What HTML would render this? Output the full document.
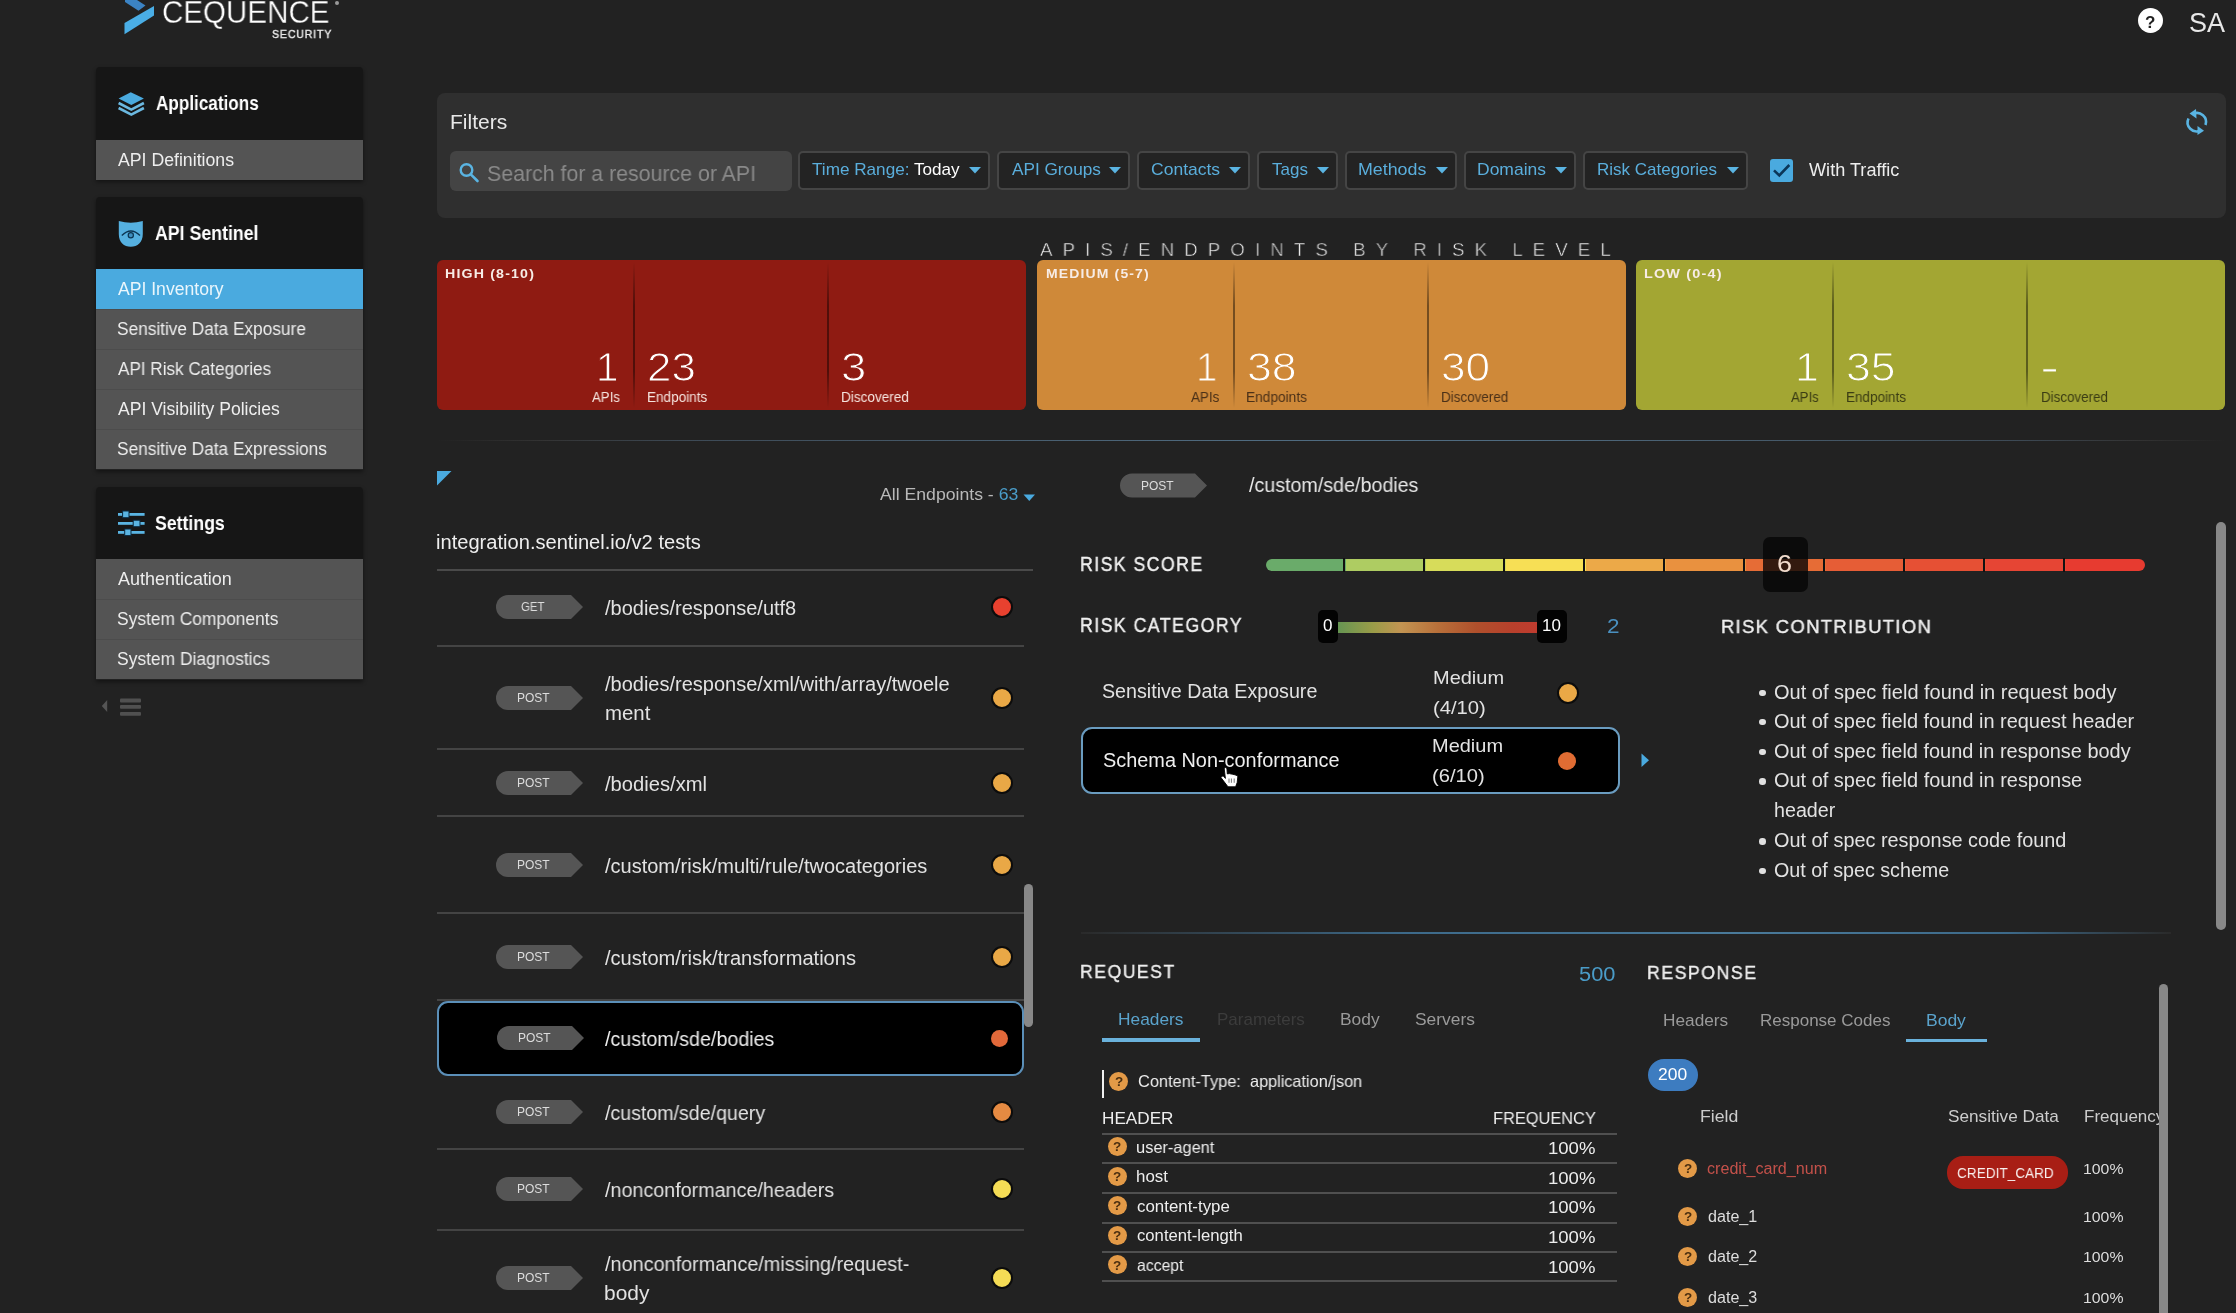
<!DOCTYPE html>
<html><head><meta charset="utf-8">
<style>
*{margin:0;padding:0;box-sizing:border-box}
html,body{width:2236px;height:1313px;overflow:hidden;background:#222222;font-family:"Liberation Sans",sans-serif;color:#e6e6e6}
.a{position:absolute;white-space:nowrap;line-height:1}
body>div[id]{will-change:transform}
svg{position:absolute;overflow:visible}
</style></head><body>
<svg style="left:0;top:0" width="200" height="50"><polygon points="125,0 137,0 145.5,5.5 138.5,10.7 125,2" fill="#3b83c4"/><polygon points="124.5,23 154,6 154,15.5 124.5,34.3" fill="#4aaee6"/></svg>
<div id="t1" class="a" style="left:162.03px;top:-3.3px;font-size:30.5px;color:#ffffff;transform:scaleX(0.9690);transform-origin:0 0;-webkit-text-stroke:0.35px #222;">CEQUENCE</div>
<div class="a" style="left:335px;top:1px;width:4px;height:4px;background:#9a9a9a;border-radius:50%"></div>
<div id="t2" class="a" style="left:272.00px;top:28.5px;font-size:11.5px;color:#ececec;letter-spacing:0.9px;transform:scaleX(0.9219);transform-origin:0 0;-webkit-text-stroke:0.4px #ececec;">SECURITY</div>
<div class="a" style="left:2138px;top:8px;width:25px;height:25px;background:#ffffff;border-radius:50%"></div>
<div id="t3" class="a" style="left:2145.00px;top:13.6px;font-size:17px;color:#222;font-weight:bold;">?</div>
<div id="t4" class="a" style="left:2189.41px;top:10.0px;font-size:27px;color:#e8e8e8;transform:scaleX(0.9914);transform-origin:0 0;">SA</div>
<div class="a" style="left:96px;top:67px;width:267px;height:113px;background:transparent;box-shadow:0 2px 4px rgba(0,0,0,0.45);border-radius:4px 4px 0 0"></div>
<div class="a" style="left:96px;top:197px;width:267px;height:273px;background:transparent;box-shadow:0 2px 4px rgba(0,0,0,0.45);border-radius:4px 4px 0 0"></div>
<div class="a" style="left:96px;top:487px;width:267px;height:193px;background:transparent;box-shadow:0 2px 4px rgba(0,0,0,0.45);border-radius:4px 4px 0 0"></div>
<div class="a" style="left:96px;top:67px;width:267px;height:73px;background:#161616;border-radius:4px 4px 0 0"></div>
<svg style="left:0;top:0" width="1" height="1"><g fill="#4aaadf"><polygon points="118.6,98.5 130.75,92.2 143.9,98.5 131.3,105.1"/><polyline points="118.6,103 131.3,109.6 143.9,103" fill="none" stroke="#6bb8e0" stroke-width="2.6"/><polyline points="118.6,108 131.3,114.6 143.9,108" fill="none" stroke="#6bb8e0" stroke-width="2.6"/></g></svg>
<div id="t5" class="a" style="left:155.80px;top:93.5px;font-size:19.5px;color:#ffffff;font-weight:bold;transform:scaleX(0.8778);transform-origin:0 0;">Applications</div>
<div class="a" style="left:96px;top:140px;width:267px;height:40px;background:#545454;"></div>
<div id="t6" class="a" style="left:118.20px;top:151.7px;font-size:17.5px;color:#eeeeee;transform:scaleX(1.0105);transform-origin:0 0;">API Definitions</div>
<div class="a" style="left:96px;top:197px;width:267px;height:73px;background:#161616;border-radius:4px 4px 0 0"></div>
<svg style="left:0;top:0" width="1" height="1"><path d="M118.8,221 Q130.8,224.5 142.8,221 L142.8,234 C142.8,242.5 137.5,246.8 130.8,246.8 C124,246.8 118.8,242.5 118.8,234 Z" fill="#55b0e0"/><path d="M121.8,235.5 Q130.8,226.5 140,235.5" fill="none" stroke="#0c3552" stroke-width="1.3"/><circle cx="130.8" cy="235.2" r="2.6" fill="#3f8fbf" stroke="#0c3552" stroke-width="1.2"/></svg>
<div id="t7" class="a" style="left:155.00px;top:223.5px;font-size:19.5px;color:#ffffff;font-weight:bold;transform:scaleX(0.9097);transform-origin:0 0;">API Sentinel</div>
<div class="a" style="left:96px;top:269px;width:267px;height:40px;background:#4aaadf;"></div>
<div id="t8" class="a" style="left:118.00px;top:280.7px;font-size:17.5px;color:#eaf6fc;transform:scaleX(1.0048);transform-origin:0 0;">API Inventory</div>
<div class="a" style="left:96px;top:309px;width:267px;height:40px;background:#545454;"></div>
<div class="a" style="left:96px;top:309px;width:267px;height:1px;background:#4c4c4c;"></div>
<div id="t9" class="a" style="left:117.01px;top:320.7px;font-size:17.5px;color:#eeeeee;transform:scaleX(0.9858);transform-origin:0 0;">Sensitive Data Exposure</div>
<div class="a" style="left:96px;top:349px;width:267px;height:40px;background:#545454;"></div>
<div class="a" style="left:96px;top:349px;width:267px;height:1px;background:#4c4c4c;"></div>
<div id="t10" class="a" style="left:118.30px;top:360.7px;font-size:17.5px;color:#eeeeee;transform:scaleX(0.9782);transform-origin:0 0;">API Risk Categories</div>
<div class="a" style="left:96px;top:389px;width:267px;height:40px;background:#545454;"></div>
<div class="a" style="left:96px;top:389px;width:267px;height:1px;background:#4c4c4c;"></div>
<div id="t11" class="a" style="left:118.30px;top:400.7px;font-size:17.5px;color:#eeeeee;transform:scaleX(1.0037);transform-origin:0 0;">API Visibility Policies</div>
<div class="a" style="left:96px;top:429px;width:267px;height:40px;background:#545454;"></div>
<div class="a" style="left:96px;top:429px;width:267px;height:1px;background:#4c4c4c;"></div>
<div id="t12" class="a" style="left:117.31px;top:440.7px;font-size:17.5px;color:#eeeeee;transform:scaleX(0.9853);transform-origin:0 0;">Sensitive Data Expressions</div>
<div class="a" style="left:96px;top:487px;width:267px;height:73px;background:#161616;border-radius:4px 4px 0 0"></div>
<svg style="left:0;top:0" width="1" height="1"><g fill="#5ab4e2"><rect x="118" y="513" width="26.6" height="2.8"/><rect x="118" y="522" width="26.6" height="2.8"/><rect x="118" y="531" width="26.6" height="2.8"/><rect x="122.6" y="511" width="6.4" height="6.7" stroke="#0a2a40" stroke-width="1"/><rect x="133.2" y="520.2" width="6.8" height="6.5" stroke="#0a2a40" stroke-width="1"/><rect x="124.7" y="529" width="6.3" height="6.6" stroke="#0a2a40" stroke-width="1"/></g></svg>
<div id="t13" class="a" style="left:155.00px;top:513.5px;font-size:19.5px;color:#ffffff;font-weight:bold;transform:scaleX(0.9066);transform-origin:0 0;">Settings</div>
<div class="a" style="left:96px;top:559px;width:267px;height:40px;background:#545454;"></div>
<div id="t14" class="a" style="left:118.30px;top:570.7px;font-size:17.5px;color:#eeeeee;transform:scaleX(1.0264);transform-origin:0 0;">Authentication</div>
<div class="a" style="left:96px;top:599px;width:267px;height:40px;background:#545454;"></div>
<div class="a" style="left:96px;top:599px;width:267px;height:1px;background:#4c4c4c;"></div>
<div id="t15" class="a" style="left:117.31px;top:610.7px;font-size:17.5px;color:#eeeeee;transform:scaleX(0.9932);transform-origin:0 0;">System Components</div>
<div class="a" style="left:96px;top:639px;width:267px;height:40px;background:#545454;"></div>
<div class="a" style="left:96px;top:639px;width:267px;height:1px;background:#4c4c4c;"></div>
<div id="t16" class="a" style="left:117.30px;top:650.7px;font-size:17.5px;color:#eeeeee;transform:scaleX(0.9954);transform-origin:0 0;">System Diagnostics</div>
<svg style="left:0;top:0" width="1" height="1"><polygon points="101.8,706.1 107.2,699.9 107.2,712" fill="#555"/><rect x="120" y="698.6" width="21" height="4" rx="1" fill="#505050"/><rect x="120" y="705" width="21" height="3.8" rx="1" fill="#505050"/><rect x="120" y="712" width="21" height="3.8" rx="1" fill="#505050"/></svg>
<div class="a" style="left:437px;top:93px;width:1789px;height:125px;background:#2f2f2f;border-radius:8px"></div>
<div id="t17" class="a" style="left:450.30px;top:111.2px;font-size:21px;color:#e8e8e8;transform:scaleX(1.0000);transform-origin:0 0;">Filters</div>
<div class="a" style="left:450px;top:151px;width:342px;height:40px;background:#444444;border-radius:6px"></div>
<svg style="left:0;top:0" width="1" height="1"><circle cx="466.5" cy="170" r="5.8" fill="none" stroke="#5ab4e2" stroke-width="2.4"/><line x1="470.8" y1="174.3" x2="477.5" y2="181" stroke="#5ab4e2" stroke-width="2.6" stroke-linecap="round"/></svg>
<div id="t18" class="a" style="left:487.06px;top:162.7px;font-size:22px;color:#8a8a8a;transform:scaleX(0.9692);transform-origin:0 0;">Search for a resource or API</div>
<div class="a" style="left:798px;top:151px;width:192px;height:39px;background:#232323;border:2px solid #454545;border-radius:5px"></div>
<div id="t19" class="a" style="left:811.80px;top:161.1px;font-size:17px;color:#5aaedc;transform:scaleX(1.0082);transform-origin:0 0;">Time Range: <span style="color:#fff">Today</span></div>
<svg style="left:0;top:0" width="1" height="1"><polygon points="969,167 981,167 975,173.5" fill="#5ab4e2"/></svg>
<div class="a" style="left:997px;top:151px;width:133px;height:39px;background:#232323;border:2px solid #454545;border-radius:5px"></div>
<div id="t20" class="a" style="left:1012.00px;top:161.1px;font-size:17px;color:#5aaedc;transform:scaleX(1.0115);transform-origin:0 0;">API Groups</div>
<svg style="left:0;top:0" width="1" height="1"><polygon points="1109,167 1121,167 1115,173.5" fill="#5ab4e2"/></svg>
<div class="a" style="left:1137px;top:151px;width:113px;height:39px;background:#232323;border:2px solid #454545;border-radius:5px"></div>
<div id="t21" class="a" style="left:1150.77px;top:161.1px;font-size:17px;color:#5aaedc;transform:scaleX(1.0303);transform-origin:0 0;">Contacts</div>
<svg style="left:0;top:0" width="1" height="1"><polygon points="1229,167 1241,167 1235,173.5" fill="#5ab4e2"/></svg>
<div class="a" style="left:1257px;top:151px;width:81px;height:39px;background:#232323;border:2px solid #454545;border-radius:5px"></div>
<div id="t22" class="a" style="left:1271.80px;top:161.1px;font-size:17px;color:#5aaedc;transform:scaleX(0.9917);transform-origin:0 0;">Tags</div>
<svg style="left:0;top:0" width="1" height="1"><polygon points="1317,167 1329,167 1323,173.5" fill="#5ab4e2"/></svg>
<div class="a" style="left:1345px;top:151px;width:112px;height:39px;background:#232323;border:2px solid #454545;border-radius:5px"></div>
<div id="t23" class="a" style="left:1358.25px;top:161.1px;font-size:17px;color:#5aaedc;transform:scaleX(1.0484);transform-origin:0 0;">Methods</div>
<svg style="left:0;top:0" width="1" height="1"><polygon points="1436,167 1448,167 1442,173.5" fill="#5ab4e2"/></svg>
<div class="a" style="left:1464px;top:151px;width:112px;height:39px;background:#232323;border:2px solid #454545;border-radius:5px"></div>
<div id="t24" class="a" style="left:1476.97px;top:161.1px;font-size:17px;color:#5aaedc;transform:scaleX(1.0288);transform-origin:0 0;">Domains</div>
<svg style="left:0;top:0" width="1" height="1"><polygon points="1555,167 1567,167 1561,173.5" fill="#5ab4e2"/></svg>
<div class="a" style="left:1583px;top:151px;width:165px;height:39px;background:#232323;border:2px solid #454545;border-radius:5px"></div>
<div id="t25" class="a" style="left:1597.30px;top:161.1px;font-size:17px;color:#5aaedc;transform:scaleX(1.0008);transform-origin:0 0;">Risk Categories</div>
<svg style="left:0;top:0" width="1" height="1"><polygon points="1727,167 1739,167 1733,173.5" fill="#5ab4e2"/></svg>
<div class="a" style="left:1770px;top:159px;width:23px;height:23px;background:#4aaadf;border-radius:3px"></div>
<svg style="left:0;top:0" width="1" height="1"><polyline points="1774,170.4 1779.3,175.4 1789.3,165" fill="none" stroke="#0b3658" stroke-width="2.6"/></svg>
<div id="t26" class="a" style="left:1809.40px;top:161.7px;font-size:17.5px;color:#eeeeee;transform:scaleX(1.0356);transform-origin:0 0;">With Traffic</div>
<svg style="left:0;top:0" width="1" height="1"><g fill="none" stroke="#5ab4e2" stroke-width="2.6"><path d="M2193,114 A9,9 0 0 1 2205.5,125"/><path d="M2200.5,130.5 A9,9 0 0 1 2188.5,118.5"/></g><polygon points="2189.5,113.5 2196,109 2196.5,118.5" fill="#5ab4e2"/><polygon points="2204,130.8 2197.5,135 2197.5,126" fill="#5ab4e2"/></svg>
<div id="t27" class="a" style="left:1040.02px;top:239.9px;font-size:19px;color:#e6e6e6;letter-spacing:10.3px;transform:scaleX(0.9810);transform-origin:0 0;-webkit-text-stroke:0.5px #222;">APIS/ENDPOINTS BY RISK LEVEL</div>
<div class="a" style="left:437px;top:260px;width:589px;height:150px;background:#8f1b12;border-radius:6px"></div>
<div id="t28" class="a" style="left:445.45px;top:266.6px;font-size:13.5px;color:#f7ece6;font-weight:bold;letter-spacing:1.1px;transform:scaleX(1.0518);transform-origin:0 0;">HIGH (8-10)</div>
<div class="a" style="left:633px;top:262px;width:2px;height:146px;background:linear-gradient(#0000,#00000070 30%,#00000070 75%,#0000);"></div>
<div class="a" style="left:827px;top:262px;width:2px;height:146px;background:linear-gradient(#0000,#00000070 30%,#00000070 75%,#0000);"></div>
<div id="t29" class="a" style="left:596.01px;top:347.1px;font-size:40px;color:#ffffff;transform:scaleX(1.0118);transform-origin:0 0;-webkit-text-stroke:1px #8f1b12;">1</div>
<div id="t30" class="a" style="left:592.20px;top:390.1px;font-size:14px;color:#f5e4de;transform:scaleX(0.9448);transform-origin:0 0;">APIs</div>
<div id="t31" class="a" style="left:647.20px;top:347.1px;font-size:40px;color:#ffffff;transform:scaleX(1.0975);transform-origin:0 0;-webkit-text-stroke:1px #8f1b12;">23</div>
<div id="t32" class="a" style="left:647.03px;top:390.1px;font-size:14px;color:#f5e4de;transform:scaleX(0.9672);transform-origin:0 0;">Endpoints</div>
<div id="t33" class="a" style="left:840.72px;top:347.1px;font-size:40px;color:#ffffff;transform:scaleX(1.1389);transform-origin:0 0;-webkit-text-stroke:1px #8f1b12;">3</div>
<div id="t34" class="a" style="left:841.33px;top:390.1px;font-size:14px;color:#f5e4de;transform:scaleX(0.9691);transform-origin:0 0;">Discovered</div>
<div class="a" style="left:1037px;top:260px;width:589px;height:150px;background:#cf8939;border-radius:6px"></div>
<div id="t35" class="a" style="left:1045.56px;top:266.6px;font-size:13.5px;color:#f7ece6;font-weight:bold;letter-spacing:1.1px;transform:scaleX(1.0361);transform-origin:0 0;">MEDIUM (5-7)</div>
<div class="a" style="left:1233px;top:262px;width:2px;height:146px;background:linear-gradient(#0000,#00000070 30%,#00000070 75%,#0000);"></div>
<div class="a" style="left:1427px;top:262px;width:2px;height:146px;background:linear-gradient(#0000,#00000070 30%,#00000070 75%,#0000);"></div>
<div id="t36" class="a" style="left:1196.08px;top:347.1px;font-size:40px;color:#ffffff;transform:scaleX(0.9588);transform-origin:0 0;-webkit-text-stroke:1px #cf8939;">1</div>
<div id="t37" class="a" style="left:1191.40px;top:390.1px;font-size:14px;color:#4a3018;transform:scaleX(0.9586);transform-origin:0 0;">APIs</div>
<div id="t38" class="a" style="left:1246.67px;top:347.1px;font-size:40px;color:#ffffff;transform:scaleX(1.1175);transform-origin:0 0;-webkit-text-stroke:1px #cf8939;">38</div>
<div id="t39" class="a" style="left:1246.32px;top:390.1px;font-size:14px;color:#4a3018;transform:scaleX(0.9787);transform-origin:0 0;">Endpoints</div>
<div id="t40" class="a" style="left:1441.29px;top:347.1px;font-size:40px;color:#ffffff;transform:scaleX(1.1049);transform-origin:0 0;-webkit-text-stroke:1px #cf8939;">30</div>
<div id="t41" class="a" style="left:1441.24px;top:390.1px;font-size:14px;color:#4a3018;transform:scaleX(0.9603);transform-origin:0 0;">Discovered</div>
<div class="a" style="left:1636px;top:260px;width:589px;height:150px;background:#a3a633;border-radius:6px"></div>
<div id="t42" class="a" style="left:1644.13px;top:266.6px;font-size:13.5px;color:#f7ece6;font-weight:bold;letter-spacing:1.1px;transform:scaleX(1.0676);transform-origin:0 0;">LOW (0-4)</div>
<div class="a" style="left:1832px;top:262px;width:2px;height:146px;background:linear-gradient(#0000,#00000070 30%,#00000070 75%,#0000);"></div>
<div class="a" style="left:2026px;top:262px;width:2px;height:146px;background:linear-gradient(#0000,#00000070 30%,#00000070 75%,#0000);"></div>
<div id="t43" class="a" style="left:1794.52px;top:347.1px;font-size:40px;color:#ffffff;transform:scaleX(1.0706);transform-origin:0 0;-webkit-text-stroke:1px #a3a633;">1</div>
<div id="t44" class="a" style="left:1791.40px;top:390.1px;font-size:14px;color:#3a3c14;transform:scaleX(0.9379);transform-origin:0 0;">APIs</div>
<div id="t45" class="a" style="left:1846.37px;top:347.1px;font-size:40px;color:#ffffff;transform:scaleX(1.1150);transform-origin:0 0;-webkit-text-stroke:1px #a3a633;">35</div>
<div id="t46" class="a" style="left:1846.44px;top:390.1px;font-size:14px;color:#3a3c14;transform:scaleX(0.9639);transform-origin:0 0;">Endpoints</div>
<div id="t47" class="a" style="left:2040.11px;top:347.1px;font-size:40px;color:#ffffff;transform:scaleX(1.4444);transform-origin:0 0;-webkit-text-stroke:1px #a3a633;">-</div>
<div id="t48" class="a" style="left:2041.04px;top:390.1px;font-size:14px;color:#3a3c14;transform:scaleX(0.9559);transform-origin:0 0;">Discovered</div>
<div class="a" style="left:437px;top:439.6px;width:1789px;height:1.8px;background:linear-gradient(90deg,#222 0%,#333 6%,#3d4a56 14%,#4f6b80 45%,#4f6b80 60%,#3d4a56 88%,#333 95%,#222 100%);"></div>
<svg style="left:0;top:0" width="1" height="1"><polygon points="437,471 451.5,471 437,485.5" fill="#4aaadf"/></svg>
<div id="t49" class="a" style="left:880.00px;top:486.2px;font-size:17px;color:#b8b8b8;transform:scaleX(1.0376);transform-origin:0 0;">All Endpoints - <span style="color:#4a9cc8">63</span></div>
<svg style="left:0;top:0" width="1" height="1"><polygon points="1023.5,494.6 1035,494.6 1029.25,501" fill="#4aaadf"/></svg>
<div id="t50" class="a" style="left:436.07px;top:533.0px;font-size:19.5px;color:#eeeeee;transform:scaleX(1.0309);transform-origin:0 0;">integration.sentinel.io/v2 tests</div>
<div class="a" style="left:437px;top:569px;width:596px;height:2px;background:#4a4a4a;"></div>
<svg style="left:0;top:0" width="1" height="1"><path d="M508,595 L571,595 L583,607 L571,619 L508,619 A12,12 0 0 1 508,595 Z" fill="#555555"/></svg>
<div id="t51" class="a" style="left:521.04px;top:601.1px;font-size:12px;color:#dddddd;transform:scaleX(0.9565);transform-origin:0 0;">GET</div>
<div id="t52" class="a" style="left:604.70px;top:597.8px;font-size:20px;color:#e2e2e2;transform:scaleX(0.9984);transform-origin:0 0;">/bodies/response/utf8</div>
<div class="a" style="left:990.5px;top:596px;width:22px;height:22px;background:#e8412f;border:2.5px solid #0c0c0c;border-radius:50%"></div>
<div class="a" style="left:437px;top:645px;width:587px;height:2px;background:#444444;"></div>
<svg style="left:0;top:0" width="1" height="1"><path d="M508,686 L571,686 L583,698 L571,710 L508,710 A12,12 0 0 1 508,686 Z" fill="#555555"/></svg>
<div id="t53" class="a" style="left:516.60px;top:692.1px;font-size:12px;color:#dddddd;transform:scaleX(0.9968);transform-origin:0 0;">POST</div>
<div id="t54" class="a" style="left:604.70px;top:673.6px;font-size:20px;color:#e2e2e2;transform:scaleX(0.9994);transform-origin:0 0;">/bodies/response/xml/with/array/twoele</div>
<div id="t55" class="a" style="left:604.58px;top:703.1px;font-size:20px;color:#e2e2e2;transform:scaleX(1.0205);transform-origin:0 0;">ment</div>
<div class="a" style="left:990.5px;top:687px;width:22px;height:22px;background:#e9a846;border:2.5px solid #0c0c0c;border-radius:50%"></div>
<div class="a" style="left:437px;top:748px;width:587px;height:2px;background:#444444;"></div>
<svg style="left:0;top:0" width="1" height="1"><path d="M508,771 L571,771 L583,783 L571,795 L508,795 A12,12 0 0 1 508,771 Z" fill="#555555"/></svg>
<div id="t56" class="a" style="left:516.60px;top:777.1px;font-size:12px;color:#dddddd;transform:scaleX(0.9968);transform-origin:0 0;">POST</div>
<div id="t57" class="a" style="left:604.70px;top:773.8px;font-size:20px;color:#e2e2e2;transform:scaleX(1.0090);transform-origin:0 0;">/bodies/xml</div>
<div class="a" style="left:990.5px;top:772px;width:22px;height:22px;background:#e9a846;border:2.5px solid #0c0c0c;border-radius:50%"></div>
<div class="a" style="left:437px;top:815px;width:587px;height:2px;background:#444444;"></div>
<svg style="left:0;top:0" width="1" height="1"><path d="M508,853 L571,853 L583,865 L571,877 L508,877 A12,12 0 0 1 508,853 Z" fill="#555555"/></svg>
<div id="t58" class="a" style="left:516.60px;top:859.1px;font-size:12px;color:#dddddd;transform:scaleX(0.9968);transform-origin:0 0;">POST</div>
<div id="t59" class="a" style="left:604.70px;top:855.8px;font-size:20px;color:#e2e2e2;transform:scaleX(0.9994);transform-origin:0 0;">/custom/risk/multi/rule/twocategories</div>
<div class="a" style="left:990.5px;top:854px;width:22px;height:22px;background:#e9a846;border:2.5px solid #0c0c0c;border-radius:50%"></div>
<div class="a" style="left:437px;top:912px;width:587px;height:2px;background:#444444;"></div>
<svg style="left:0;top:0" width="1" height="1"><path d="M508,945 L571,945 L583,957 L571,969 L508,969 A12,12 0 0 1 508,945 Z" fill="#555555"/></svg>
<div id="t60" class="a" style="left:516.60px;top:951.1px;font-size:12px;color:#dddddd;transform:scaleX(0.9968);transform-origin:0 0;">POST</div>
<div id="t61" class="a" style="left:604.70px;top:947.8px;font-size:20px;color:#e2e2e2;transform:scaleX(1.0036);transform-origin:0 0;">/custom/risk/transformations</div>
<div class="a" style="left:990.5px;top:946px;width:22px;height:22px;background:#e9a846;border:2.5px solid #0c0c0c;border-radius:50%"></div>
<div class="a" style="left:437px;top:999px;width:587px;height:2px;background:#444444;"></div>
<div class="a" style="left:437px;top:1001px;width:587px;height:75px;background:#000000;border:2px solid #5b8fb8;border-radius:11px"></div>
<svg style="left:0;top:0" width="1" height="1"><path d="M509,1026 L572,1026 L584,1038 L572,1050 L509,1050 A12,12 0 0 1 509,1026 Z" fill="#555555"/></svg>
<div id="t62" class="a" style="left:517.60px;top:1032.1px;font-size:12px;color:#dddddd;transform:scaleX(0.9968);transform-origin:0 0;">POST</div>
<div id="t63" class="a" style="left:605.30px;top:1028.6px;font-size:20px;color:#eeeeee;transform:scaleX(0.9826);transform-origin:0 0;">/custom/sde/bodies</div>
<div class="a" style="left:991.0px;top:1029.5px;width:17px;height:17px;background:#e2693a;border-radius:50%"></div>
<svg style="left:0;top:0" width="1" height="1"><path d="M508,1100 L571,1100 L583,1112 L571,1124 L508,1124 A12,12 0 0 1 508,1100 Z" fill="#555555"/></svg>
<div id="t64" class="a" style="left:516.60px;top:1106.1px;font-size:12px;color:#dddddd;transform:scaleX(0.9968);transform-origin:0 0;">POST</div>
<div id="t65" class="a" style="left:604.70px;top:1102.8px;font-size:20px;color:#e2e2e2;transform:scaleX(0.9793);transform-origin:0 0;">/custom/sde/query</div>
<div class="a" style="left:990.5px;top:1101px;width:22px;height:22px;background:#e58a42;border:2.5px solid #0c0c0c;border-radius:50%"></div>
<div class="a" style="left:437px;top:1148px;width:587px;height:2px;background:#444444;"></div>
<svg style="left:0;top:0" width="1" height="1"><path d="M508,1177 L571,1177 L583,1189 L571,1201 L508,1201 A12,12 0 0 1 508,1177 Z" fill="#555555"/></svg>
<div id="t66" class="a" style="left:516.60px;top:1183.1px;font-size:12px;color:#dddddd;transform:scaleX(0.9968);transform-origin:0 0;">POST</div>
<div id="t67" class="a" style="left:604.70px;top:1179.8px;font-size:20px;color:#e2e2e2;transform:scaleX(0.9862);transform-origin:0 0;">/nonconformance/headers</div>
<div class="a" style="left:990.5px;top:1178px;width:22px;height:22px;background:#f5dc55;border:2.5px solid #0c0c0c;border-radius:50%"></div>
<div class="a" style="left:437px;top:1229px;width:587px;height:2px;background:#444444;"></div>
<svg style="left:0;top:0" width="1" height="1"><path d="M508,1266 L571,1266 L583,1278 L571,1290 L508,1290 A12,12 0 0 1 508,1266 Z" fill="#555555"/></svg>
<div id="t68" class="a" style="left:516.60px;top:1272.1px;font-size:12px;color:#dddddd;transform:scaleX(0.9968);transform-origin:0 0;">POST</div>
<div id="t69" class="a" style="left:604.70px;top:1253.6px;font-size:20px;color:#e2e2e2;transform:scaleX(0.9918);transform-origin:0 0;">/nonconformance/missing/request-</div>
<div id="t70" class="a" style="left:604.25px;top:1283.1px;font-size:20px;color:#e2e2e2;transform:scaleX(1.0452);transform-origin:0 0;">body</div>
<div class="a" style="left:990.5px;top:1267px;width:22px;height:22px;background:#f5dc55;border:2.5px solid #0c0c0c;border-radius:50%"></div>
<div class="a" style="left:1024px;top:884px;width:9px;height:143px;background:#888888;border-radius:5px"></div>
<svg style="left:0;top:0" width="1" height="1"><path d="M1132,473.5 L1195,473.5 L1207,485.5 L1195,497.5 L1132,497.5 A12,12 0 0 1 1132,473.5 Z" fill="#555555"/></svg>
<div id="t71" class="a" style="left:1140.60px;top:479.6px;font-size:12px;color:#dddddd;transform:scaleX(0.9968);transform-origin:0 0;">POST</div>
<div id="t72" class="a" style="left:1249.30px;top:475.4px;font-size:20px;color:#e8e8e8;transform:scaleX(0.9831);transform-origin:0 0;">/custom/sde/bodies</div>
<div id="t73" class="a" style="left:1080.24px;top:554.9px;font-size:19.5px;color:#f0f0f0;letter-spacing:1.6px;transform:scaleX(0.9068);transform-origin:0 0;-webkit-text-stroke:0.4px #f0f0f0;">RISK SCORE</div>
<div class="a" style="left:1265.5px;top:559px;width:80px;height:11.5px;background:#6aab6a;border-radius:6px 0 0 6px"></div>
<div class="a" style="left:1345.5px;top:559px;width:80px;height:11.5px;background:#aecc62;"></div>
<div class="a" style="left:1425.5px;top:559px;width:80px;height:11.5px;background:#d7dc5a;"></div>
<div class="a" style="left:1505.5px;top:559px;width:80px;height:11.5px;background:#f7df55;"></div>
<div class="a" style="left:1585.5px;top:559px;width:80px;height:11.5px;background:#eca948;"></div>
<div class="a" style="left:1665.5px;top:559px;width:80px;height:11.5px;background:#e9913f;"></div>
<div class="a" style="left:1745.5px;top:559px;width:80px;height:11.5px;background:#e66c36;"></div>
<div class="a" style="left:1825.5px;top:559px;width:80px;height:11.5px;background:#e65d36;"></div>
<div class="a" style="left:1905.5px;top:559px;width:80px;height:11.5px;background:#e65034;"></div>
<div class="a" style="left:1985.5px;top:559px;width:80px;height:11.5px;background:#e64534;"></div>
<div class="a" style="left:2065.5px;top:559px;width:79px;height:11.5px;background:#e73b30;border-radius:0 6px 6px 0"></div>
<div class="a" style="left:1343.0px;top:558px;width:2.2px;height:13.5px;background:#111111;"></div>
<div class="a" style="left:1423.0px;top:558px;width:2.2px;height:13.5px;background:#111111;"></div>
<div class="a" style="left:1503.0px;top:558px;width:2.2px;height:13.5px;background:#111111;"></div>
<div class="a" style="left:1583.0px;top:558px;width:2.2px;height:13.5px;background:#111111;"></div>
<div class="a" style="left:1663.0px;top:558px;width:2.2px;height:13.5px;background:#111111;"></div>
<div class="a" style="left:1743.0px;top:558px;width:2.2px;height:13.5px;background:#111111;"></div>
<div class="a" style="left:1823.0px;top:558px;width:2.2px;height:13.5px;background:#111111;"></div>
<div class="a" style="left:1903.0px;top:558px;width:2.2px;height:13.5px;background:#111111;"></div>
<div class="a" style="left:1983.0px;top:558px;width:2.2px;height:13.5px;background:#111111;"></div>
<div class="a" style="left:2063.0px;top:558px;width:2.2px;height:13.5px;background:#111111;"></div>
<div class="a" style="left:1763px;top:537px;width:45px;height:55px;background:rgba(6,6,6,0.8);border-radius:7px"></div>
<div id="t74" class="a" style="left:1776.88px;top:551.7px;font-size:24px;color:#f2dccd;transform:scaleX(1.1250);transform-origin:0 0;">6</div>
<div id="t75" class="a" style="left:1080.24px;top:616.3px;font-size:19.5px;color:#f0f0f0;letter-spacing:1.6px;transform:scaleX(0.9090);transform-origin:0 0;-webkit-text-stroke:0.4px #f0f0f0;">RISK CATEGORY</div>
<div class="a" style="left:1330px;top:621.5px;width:215px;height:11.5px;background:linear-gradient(90deg,#5a9455 0%,#9a9c48 20%,#c29452 33%,#b8703a 50%,#b0502c 68%,#b8402c 85%,#c23a30 100%);"></div>
<div class="a" style="left:1318px;top:609.5px;width:20px;height:33px;background:#030303;border-radius:5px"></div>
<div id="t76" class="a" style="left:1323.12px;top:617.4px;font-size:17px;color:#ffffff;transform:scaleX(0.9556);transform-origin:0 0;">0</div>
<div class="a" style="left:1537px;top:609.5px;width:30px;height:33px;background:#030303;border-radius:5px"></div>
<div id="t77" class="a" style="left:1542.31px;top:617.4px;font-size:17px;color:#ffffff;transform:scaleX(0.9944);transform-origin:0 0;">10</div>
<div id="t78" class="a" style="left:1606.90px;top:615.6px;font-size:20.5px;color:#4a90c0;transform:scaleX(1.1000);transform-origin:0 0;">2</div>
<div id="t79" class="a" style="left:1720.83px;top:616.6px;font-size:19px;color:#f0f0f0;letter-spacing:1.4px;transform:scaleX(0.9684);transform-origin:0 0;-webkit-text-stroke:0.4px #f0f0f0;">RISK CONTRIBUTION</div>
<div id="t80" class="a" style="left:1101.89px;top:682.2px;font-size:19.5px;color:#e2e2e2;transform:scaleX(1.0085);transform-origin:0 0;">Sensitive Data Exposure</div>
<div id="t81" class="a" style="left:1432.75px;top:668.0px;font-size:19px;color:#e2e2e2;transform:scaleX(1.0515);transform-origin:0 0;">Medium</div>
<div id="t82" class="a" style="left:1432.74px;top:697.9px;font-size:19px;color:#e2e2e2;transform:scaleX(1.0646);transform-origin:0 0;">(4/10)</div>
<div class="a" style="left:1557px;top:681.5px;width:22px;height:22px;background:#eaa846;border:2.5px solid #0c0c0c;border-radius:50%"></div>
<div class="a" style="left:1081px;top:727px;width:539px;height:67px;background:#000000;border:2px solid #6a9cc0;border-radius:11px"></div>
<div id="t83" class="a" style="left:1102.87px;top:750.5px;font-size:19.5px;color:#eeeeee;transform:scaleX(1.0200);transform-origin:0 0;">Schema Non-conformance</div>
<div id="t84" class="a" style="left:1432.35px;top:735.6px;font-size:19px;color:#e2e2e2;transform:scaleX(1.0515);transform-origin:0 0;">Medium</div>
<div id="t85" class="a" style="left:1432.34px;top:765.5px;font-size:19px;color:#e2e2e2;transform:scaleX(1.0604);transform-origin:0 0;">(6/10)</div>
<div class="a" style="left:1558.0px;top:752.0px;width:18px;height:18px;background:#e06c33;border-radius:50%"></div>
<svg style="left:0;top:0" width="1" height="1"><polygon points="1641.5,753.6 1649,760.3 1641.5,767" fill="#4aaadf"/></svg>
<svg style="left:0;top:0" width="1" height="1"><path d="M1224.2,768.5 Q1225.5,766.6 1226.9,768.5 L1227.3,773.9 L1229.3,773.6 L1231.2,774 L1232.8,774.3 L1235,774.8 L1237.9,776 L1237.2,782.5 L1235.6,786.8 L1228,786.8 L1221,777.6 Q1221.6,775.2 1223.6,776.2 L1225.4,778.4 Z" fill="#ffffff" stroke="#000" stroke-width="0.9"/><g stroke="#555" stroke-width="0.8"><line x1="1229" y1="778.5" x2="1229" y2="782.8"/><line x1="1231.4" y1="778.5" x2="1231.4" y2="782.8"/><line x1="1234.2" y1="778.5" x2="1234.2" y2="782.8"/></g></svg>
<div class="a" style="left:1759px;top:689.6px;width:6.5px;height:6.5px;background:#e0e0e0;border-radius:50%"></div>
<div id="t86" class="a" style="left:1773.96px;top:682.6px;font-size:19.5px;color:#e2e2e2;transform:scaleX(1.0255);transform-origin:0 0;">Out of spec field found in request body</div>
<div class="a" style="left:1759px;top:718.9000000000001px;width:6.5px;height:6.5px;background:#e0e0e0;border-radius:50%"></div>
<div id="t87" class="a" style="left:1773.97px;top:711.9px;font-size:19.5px;color:#e2e2e2;transform:scaleX(1.0222);transform-origin:0 0;">Out of spec field found in request header</div>
<div class="a" style="left:1759px;top:748.8000000000001px;width:6.5px;height:6.5px;background:#e0e0e0;border-radius:50%"></div>
<div id="t88" class="a" style="left:1773.97px;top:741.8px;font-size:19.5px;color:#e2e2e2;transform:scaleX(1.0216);transform-origin:0 0;">Out of spec field found in response body</div>
<div class="a" style="left:1759px;top:778.3000000000001px;width:6.5px;height:6.5px;background:#e0e0e0;border-radius:50%"></div>
<div id="t89" class="a" style="left:1773.97px;top:771.3px;font-size:19.5px;color:#e2e2e2;transform:scaleX(1.0227);transform-origin:0 0;">Out of spec field found in response</div>
<div id="t90" class="a" style="left:1773.98px;top:800.8px;font-size:19.5px;color:#e2e2e2;transform:scaleX(1.0100);transform-origin:0 0;">header</div>
<div class="a" style="left:1759px;top:838.2px;width:6.5px;height:6.5px;background:#e0e0e0;border-radius:50%"></div>
<div id="t91" class="a" style="left:1773.97px;top:831.2px;font-size:19.5px;color:#e2e2e2;transform:scaleX(1.0175);transform-origin:0 0;">Out of spec response code found</div>
<div class="a" style="left:1759px;top:867.7px;width:6.5px;height:6.5px;background:#e0e0e0;border-radius:50%"></div>
<div id="t92" class="a" style="left:1773.98px;top:860.7px;font-size:19.5px;color:#e2e2e2;transform:scaleX(1.0105);transform-origin:0 0;">Out of spec scheme</div>
<div class="a" style="left:2216px;top:522px;width:9.5px;height:408px;background:#888888;border-radius:5px"></div>
<div class="a" style="left:1081px;top:931.5px;width:1090px;height:2px;background:linear-gradient(90deg,#2a2a2a,#3d6a8a 30%,#4a7a9a 60%,#3d6a8a 85%,#2a2a2a);"></div>
<div id="t93" class="a" style="left:1079.87px;top:963.2px;font-size:18.5px;color:#eeeeee;letter-spacing:1.6px;transform:scaleX(0.9510);transform-origin:0 0;-webkit-text-stroke:0.4px #f0f0f0;">REQUEST</div>
<div id="t94" class="a" style="left:1579.41px;top:963.7px;font-size:20px;color:#4a9cc8;transform:scaleX(1.0906);transform-origin:0 0;">500</div>
<div id="t95" class="a" style="left:1117.78px;top:1011.1px;font-size:17px;color:#5aa3cc;transform:scaleX(1.0190);transform-origin:0 0;">Headers</div>
<div id="t96" class="a" style="left:1216.50px;top:1011.1px;font-size:17px;color:#3c3c3c;">Parameters</div>
<div id="t97" class="a" style="left:1339.76px;top:1011.1px;font-size:17px;color:#9a9a9a;transform:scaleX(1.0237);transform-origin:0 0;">Body</div>
<div id="t98" class="a" style="left:1414.97px;top:1011.1px;font-size:17px;color:#9a9a9a;transform:scaleX(1.0228);transform-origin:0 0;">Servers</div>
<div class="a" style="left:1102px;top:1038px;width:98px;height:3.5px;background:#6ab2dc;"></div>
<div class="a" style="left:1102px;top:1069.5px;width:2px;height:28.5px;background:#f0f0f0;"></div>
<div class="a" style="left:1109.0px;top:1072.0px;width:19px;height:19px;background:#e39a47;border-radius:50%"></div>
<div id="t99" class="a" style="left:1114.80px;top:1075.1px;font-size:13.5px;color:#4a2e10;font-weight:bold;">?</div>
<div id="t100" class="a" style="left:1137.71px;top:1073.2px;font-size:16.5px;color:#eeeeee;transform:scaleX(0.9931);transform-origin:0 0;">Content-Type:</div>
<div id="t101" class="a" style="left:1250.30px;top:1073.2px;font-size:16.5px;color:#eeeeee;transform:scaleX(0.9858);transform-origin:0 0;">application/json</div>
<div id="t102" class="a" style="left:1101.59px;top:1109.5px;font-size:17px;color:#eeeeee;transform:scaleX(1.0087);transform-origin:0 0;">HEADER</div>
<div id="t103" class="a" style="left:1493.09px;top:1109.6px;font-size:17px;color:#eeeeee;transform:scaleX(0.9638);transform-origin:0 0;">FREQUENCY</div>
<div class="a" style="left:1102px;top:1132.5px;width:515px;height:2px;background:#505050;"></div>
<div class="a" style="left:1102px;top:1162px;width:515px;height:2px;background:#505050;"></div>
<div class="a" style="left:1102px;top:1191.5px;width:515px;height:2px;background:#505050;"></div>
<div class="a" style="left:1102px;top:1221.5px;width:515px;height:2px;background:#505050;"></div>
<div class="a" style="left:1102px;top:1251px;width:515px;height:2px;background:#505050;"></div>
<div class="a" style="left:1102px;top:1280px;width:515px;height:2px;background:#505050;"></div>
<div class="a" style="left:1107.5px;top:1137.0px;width:19px;height:19px;background:#e39a47;border-radius:50%"></div>
<div id="t104" class="a" style="left:1113.30px;top:1140.1px;font-size:13.5px;color:#4a2e10;font-weight:bold;">?</div>
<div id="t105" class="a" style="left:1136.31px;top:1138.5px;font-size:16.5px;color:#eeeeee;transform:scaleX(0.9936);transform-origin:0 0;">user-agent</div>
<div id="t106" class="a" style="left:1547.58px;top:1140.1px;font-size:17px;color:#eeeeee;transform:scaleX(1.0905);transform-origin:0 0;">100%</div>
<div class="a" style="left:1107.5px;top:1166.6px;width:19px;height:19px;background:#e39a47;border-radius:50%"></div>
<div id="t107" class="a" style="left:1113.30px;top:1169.7px;font-size:13.5px;color:#4a2e10;font-weight:bold;">?</div>
<div id="t108" class="a" style="left:1136.28px;top:1168.1px;font-size:16.5px;color:#eeeeee;transform:scaleX(1.0233);transform-origin:0 0;">host</div>
<div id="t109" class="a" style="left:1547.58px;top:1169.7px;font-size:17px;color:#eeeeee;transform:scaleX(1.0905);transform-origin:0 0;">100%</div>
<div class="a" style="left:1107.5px;top:1196.2px;width:19px;height:19px;background:#e39a47;border-radius:50%"></div>
<div id="t110" class="a" style="left:1113.30px;top:1199.3px;font-size:13.5px;color:#4a2e10;font-weight:bold;">?</div>
<div id="t111" class="a" style="left:1137.30px;top:1197.7px;font-size:16.5px;color:#eeeeee;transform:scaleX(1.0222);transform-origin:0 0;">content-type</div>
<div id="t112" class="a" style="left:1547.58px;top:1199.3px;font-size:17px;color:#eeeeee;transform:scaleX(1.0905);transform-origin:0 0;">100%</div>
<div class="a" style="left:1107.5px;top:1225.8px;width:19px;height:19px;background:#e39a47;border-radius:50%"></div>
<div id="t113" class="a" style="left:1113.30px;top:1228.9px;font-size:13.5px;color:#4a2e10;font-weight:bold;">?</div>
<div id="t114" class="a" style="left:1137.30px;top:1227.3px;font-size:16.5px;color:#eeeeee;transform:scaleX(1.0106);transform-origin:0 0;">content-length</div>
<div id="t115" class="a" style="left:1547.58px;top:1228.9px;font-size:17px;color:#eeeeee;transform:scaleX(1.0905);transform-origin:0 0;">100%</div>
<div class="a" style="left:1107.5px;top:1255.4px;width:19px;height:19px;background:#e39a47;border-radius:50%"></div>
<div id="t116" class="a" style="left:1113.30px;top:1258.5px;font-size:13.5px;color:#4a2e10;font-weight:bold;">?</div>
<div id="t117" class="a" style="left:1137.30px;top:1256.9px;font-size:16.5px;color:#eeeeee;transform:scaleX(0.9551);transform-origin:0 0;">accept</div>
<div id="t118" class="a" style="left:1547.58px;top:1258.5px;font-size:17px;color:#eeeeee;transform:scaleX(1.0905);transform-origin:0 0;">100%</div>
<div id="t119" class="a" style="left:1646.94px;top:963.8px;font-size:18.5px;color:#eeeeee;letter-spacing:1.6px;transform:scaleX(0.9558);transform-origin:0 0;-webkit-text-stroke:0.4px #f0f0f0;">RESPONSE</div>
<div id="t120" class="a" style="left:1663.09px;top:1011.6px;font-size:17px;color:#9a9a9a;transform:scaleX(1.0143);transform-origin:0 0;">Headers</div>
<div id="t121" class="a" style="left:1760.30px;top:1011.6px;font-size:17px;color:#9a9a9a;transform:scaleX(0.9977);transform-origin:0 0;">Response Codes</div>
<div id="t122" class="a" style="left:1925.87px;top:1011.6px;font-size:17px;color:#5aa3cc;transform:scaleX(1.0289);transform-origin:0 0;">Body</div>
<div class="a" style="left:1906px;top:1038.5px;width:81px;height:3.3px;background:#6ab2dc;"></div>
<div class="a" style="left:1647.5px;top:1058.5px;width:50.5px;height:32px;background:#3d7cc0;border-radius:16px"></div>
<div id="t123" class="a" style="left:1658.24px;top:1066.0px;font-size:16.5px;color:#ffffff;transform:scaleX(1.0577);transform-origin:0 0;">200</div>
<div id="t124" class="a" style="left:1699.96px;top:1107.6px;font-size:17px;color:#cccccc;transform:scaleX(1.0400);transform-origin:0 0;">Field</div>
<div id="t125" class="a" style="left:1948.08px;top:1107.6px;font-size:17px;color:#cccccc;transform:scaleX(1.0110);transform-origin:0 0;">Sensitive Data</div>
<div class="a" style="left:2084px;top:0;width:75px;height:1313px;overflow:hidden"><div id="t126" class="a" style="left:0.00px;top:1107.6px;font-size:17px;color:#cccccc;">Frequency</div>
</div>
<div class="a" style="left:1678.0px;top:1159.1px;width:19px;height:19px;background:#e39a47;border-radius:50%"></div>
<div id="t127" class="a" style="left:1683.80px;top:1162.2px;font-size:13.5px;color:#4a2e10;font-weight:bold;">?</div>
<div id="t128" class="a" style="left:1707.09px;top:1160.9px;font-size:16px;color:#c4514a;transform:scaleX(1.0077);transform-origin:0 0;">credit_card_num</div>
<div class="a" style="left:1947px;top:1156px;width:120.5px;height:32.5px;background:#a81e15;border-radius:16px"></div>
<div id="t129" class="a" style="left:1957.19px;top:1164.5px;font-size:15px;color:#f8f0ee;transform:scaleX(0.9074);transform-origin:0 0;">CREDIT_CARD</div>
<div id="t130" class="a" style="left:2082.92px;top:1160.8px;font-size:15px;color:#dddddd;transform:scaleX(1.0541);transform-origin:0 0;">100%</div>
<div class="a" style="left:1678.0px;top:1206.8px;width:19px;height:19px;background:#e39a47;border-radius:50%"></div>
<div id="t131" class="a" style="left:1683.80px;top:1209.9px;font-size:13.5px;color:#4a2e10;font-weight:bold;">?</div>
<div id="t132" class="a" style="left:1708.10px;top:1209.1px;font-size:16px;color:#dddddd;transform:scaleX(1.0063);transform-origin:0 0;">date_1</div>
<div id="t133" class="a" style="left:2082.92px;top:1208.8px;font-size:15px;color:#dddddd;transform:scaleX(1.0541);transform-origin:0 0;">100%</div>
<div class="a" style="left:1678.0px;top:1246.8px;width:19px;height:19px;background:#e39a47;border-radius:50%"></div>
<div id="t134" class="a" style="left:1683.80px;top:1249.9px;font-size:13.5px;color:#4a2e10;font-weight:bold;">?</div>
<div id="t135" class="a" style="left:1708.10px;top:1249.1px;font-size:16px;color:#dddddd;transform:scaleX(1.0063);transform-origin:0 0;">date_2</div>
<div id="t136" class="a" style="left:2082.92px;top:1248.8px;font-size:15px;color:#dddddd;transform:scaleX(1.0541);transform-origin:0 0;">100%</div>
<div class="a" style="left:1678.0px;top:1287.7px;width:19px;height:19px;background:#e39a47;border-radius:50%"></div>
<div id="t137" class="a" style="left:1683.80px;top:1290.8px;font-size:13.5px;color:#4a2e10;font-weight:bold;">?</div>
<div id="t138" class="a" style="left:1708.10px;top:1290.0px;font-size:16px;color:#dddddd;transform:scaleX(1.0063);transform-origin:0 0;">date_3</div>
<div id="t139" class="a" style="left:2082.92px;top:1289.7px;font-size:15px;color:#dddddd;transform:scaleX(1.0541);transform-origin:0 0;">100%</div>
<div class="a" style="left:2158.5px;top:984px;width:9.5px;height:340px;background:#888888;border-radius:5px"></div>
</body></html>
